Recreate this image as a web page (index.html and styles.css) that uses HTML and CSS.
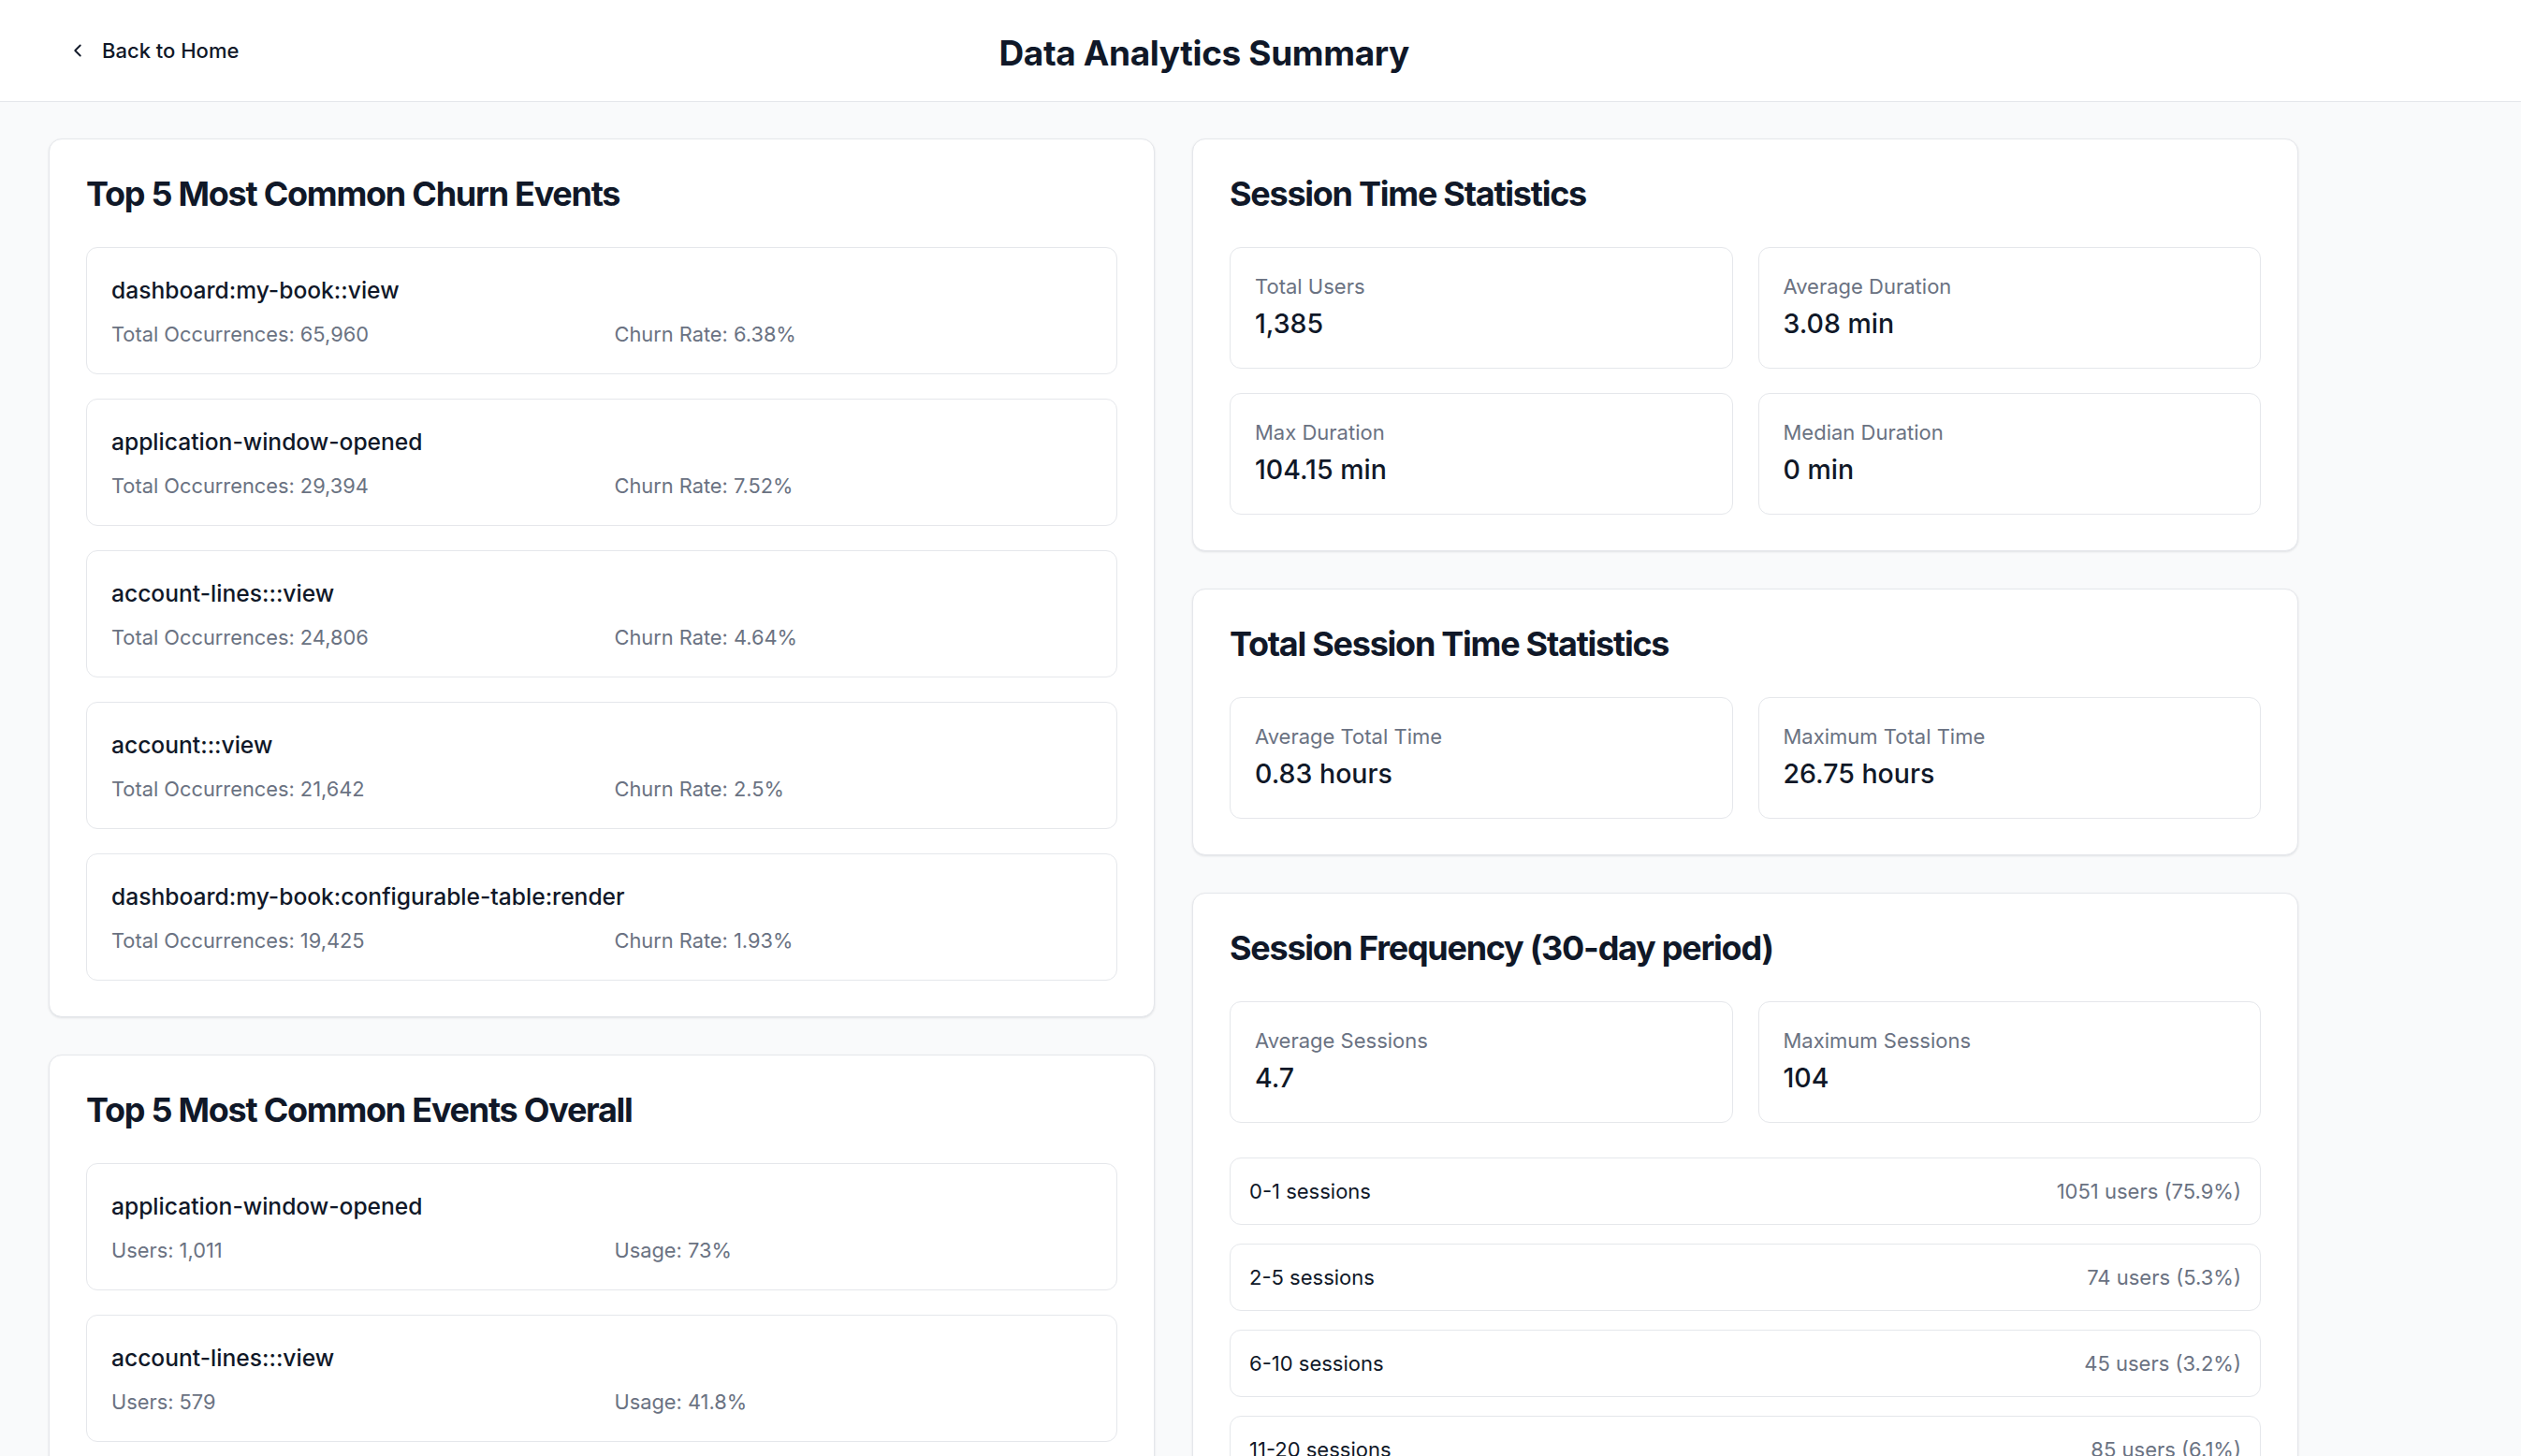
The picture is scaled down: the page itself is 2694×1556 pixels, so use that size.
FILE: index.html
```html
<!DOCTYPE html>
<html lang="en">
<head>
    <meta charset="UTF-8">
    <meta name="viewport" content="width=device-width, initial-scale=1.0">
    <title>Data Analytics Summary</title>
    <link rel="stylesheet" href="styles.css">
</head>
<body>
    <header class="top-bar">
        <a class="back-link" href="#">
            <svg class="back-icon" viewBox="0 0 24 24" fill="none" stroke="currentColor" stroke-width="2" stroke-linecap="round" stroke-linejoin="round">
                <path d="m15 18-6-6 6-6"/>
            </svg>
            <span>Back to Home</span>
        </a>
        <h1 class="page-title">Data Analytics Summary</h1>
        <div class="top-bar-spacer"></div>
    </header>

    <main class="page">
        <div class="columns">
            <div class="column">
                <section class="card">
                    <h2 class="card-title">Top 5 Most Common Churn Events</h2>
                    <div class="event-list">
                        <div class="event-item">
                            <div class="event-name">dashboard:my-book::view</div>
                            <div class="event-meta">
                                <span>Total Occurrences: 65,960</span>
                                <span>Churn Rate: 6.38%</span>
                            </div>
                        </div>
                        <div class="event-item">
                            <div class="event-name">application-window-opened</div>
                            <div class="event-meta">
                                <span>Total Occurrences: 29,394</span>
                                <span>Churn Rate: 7.52%</span>
                            </div>
                        </div>
                        <div class="event-item">
                            <div class="event-name">account-lines:::view</div>
                            <div class="event-meta">
                                <span>Total Occurrences: 24,806</span>
                                <span>Churn Rate: 4.64%</span>
                            </div>
                        </div>
                        <div class="event-item">
                            <div class="event-name">account:::view</div>
                            <div class="event-meta">
                                <span>Total Occurrences: 21,642</span>
                                <span>Churn Rate: 2.5%</span>
                            </div>
                        </div>
                        <div class="event-item">
                            <div class="event-name">dashboard:my-book:configurable-table:render</div>
                            <div class="event-meta">
                                <span>Total Occurrences: 19,425</span>
                                <span>Churn Rate: 1.93%</span>
                            </div>
                        </div>
                    </div>
                </section>

                <section class="card">
                    <h2 class="card-title">Top 5 Most Common Events Overall</h2>
                    <div class="event-list">
                        <div class="event-item">
                            <div class="event-name">application-window-opened</div>
                            <div class="event-meta">
                                <span>Users: 1,011</span>
                                <span>Usage: 73%</span>
                            </div>
                        </div>
                        <div class="event-item">
                            <div class="event-name">account-lines:::view</div>
                            <div class="event-meta">
                                <span>Users: 579</span>
                                <span>Usage: 41.8%</span>
                            </div>
                        </div>
                    </div>
                </section>
            </div>

            <div class="column">
                <section class="card">
                    <h2 class="card-title">Session Time Statistics</h2>
                    <div class="stat-grid">
                        <div class="stat-box">
                            <div class="stat-label">Total Users</div>
                            <div class="stat-value">1,385</div>
                        </div>
                        <div class="stat-box">
                            <div class="stat-label">Average Duration</div>
                            <div class="stat-value">3.08 min</div>
                        </div>
                        <div class="stat-box">
                            <div class="stat-label">Max Duration</div>
                            <div class="stat-value">104.15 min</div>
                        </div>
                        <div class="stat-box">
                            <div class="stat-label">Median Duration</div>
                            <div class="stat-value">0 min</div>
                        </div>
                    </div>
                </section>

                <section class="card">
                    <h2 class="card-title">Total Session Time Statistics</h2>
                    <div class="stat-grid">
                        <div class="stat-box">
                            <div class="stat-label">Average Total Time</div>
                            <div class="stat-value">0.83 hours</div>
                        </div>
                        <div class="stat-box">
                            <div class="stat-label">Maximum Total Time</div>
                            <div class="stat-value">26.75 hours</div>
                        </div>
                    </div>
                </section>

                <section class="card">
                    <h2 class="card-title">Session Frequency (30-day period)</h2>
                    <div class="stat-grid">
                        <div class="stat-box">
                            <div class="stat-label">Average Sessions</div>
                            <div class="stat-value">4.7</div>
                        </div>
                        <div class="stat-box">
                            <div class="stat-label">Maximum Sessions</div>
                            <div class="stat-value">104</div>
                        </div>
                    </div>
                    <div class="freq-list">
                        <div class="freq-row">
                            <span class="freq-range">0-1 sessions</span>
                            <span class="freq-count">1051 users (75.9%)</span>
                        </div>
                        <div class="freq-row">
                            <span class="freq-range">2-5 sessions</span>
                            <span class="freq-count">74 users (5.3%)</span>
                        </div>
                        <div class="freq-row">
                            <span class="freq-range">6-10 sessions</span>
                            <span class="freq-count">45 users (3.2%)</span>
                        </div>
                        <div class="freq-row">
                            <span class="freq-range">11-20 sessions</span>
                            <span class="freq-count">85 users (6.1%)</span>
                        </div>
                    </div>
                </section>
            </div>
        </div>
    </main>
</body>
</html>
```

FILE: styles.css
```css
* {
    box-sizing: border-box;
}
body {
    font-family: 'Inter', 'Noto Sans', sans-serif;
    margin: 0;
    background-color: #f9fafb;
    color: #101828;
}
.top-bar {
    display: flex;
    align-items: center;
    height: 109px;
    padding: 0 72px;
    background: white;
    border-bottom: 1px solid #e5e7eb;
}
.back-link {
    display: flex;
    align-items: center;
    gap: 15px;
    color: #101828;
    text-decoration: none;
    font-size: 22px;
    font-weight: 500;
    line-height: 1.2;
}
.back-icon {
    width: 22px;
    height: 22px;
}
.page-title {
    flex: 1;
    margin: 4px 0 0;
    text-align: center;
    font-size: 37px;
    font-weight: 700;
    line-height: 1;
    letter-spacing: -0.01em;
}
.top-bar-spacer {
    width: 304px;
}
.page {
    padding: 39px 52px;
}
.columns {
    max-width: 2404px;
    display: grid;
    grid-template-columns: 1fr 1fr;
    gap: 40px;
    align-items: start;
}
.column {
    display: flex;
    flex-direction: column;
    gap: 40px;
}
.card {
    background: white;
    border: 1px solid #e5e7eb;
    border-radius: 14px;
    box-shadow: 0 1px 3px rgba(16, 24, 40, 0.07), 0 1px 2px rgba(16, 24, 40, 0.04);
    padding: 40px 39px 38px;
}
.card-title {
    margin: 0 0 38px;
    font-size: 36px;
    font-weight: 700;
    line-height: 37px;
    letter-spacing: -0.035em;
}
.event-list {
    display: flex;
    flex-direction: column;
    gap: 26px;
}
.event-item {
    border: 1px solid #e5e7eb;
    border-radius: 12px;
    padding: 27px 26px;
}
.event-name {
    font-size: 24.6px;
    font-weight: 500;
    line-height: 36px;
    margin-bottom: 15px;
}
.event-meta {
    display: grid;
    grid-template-columns: 1fr 1fr;
    gap: 27px;
    font-size: 21.8px;
    line-height: 29px;
    color: #6a7282;
}
.stat-grid {
    display: grid;
    grid-template-columns: 1fr 1fr;
    gap: 26px 27px;
}
.stat-box {
    border: 1px solid #e5e7eb;
    border-radius: 12px;
    padding: 27px 26px;
}
.stat-label {
    font-size: 22px;
    line-height: 29px;
    color: #6a7282;
}
.stat-value {
    margin-top: 4px;
    font-size: 28.5px;
    font-weight: 500;
    line-height: 41px;
}
.freq-list {
    display: flex;
    flex-direction: column;
    gap: 20px;
    margin-top: 37px;
}
.freq-row {
    display: flex;
    justify-content: space-between;
    align-items: center;
    border: 1px solid #e5e7eb;
    border-radius: 12px;
    padding: 20px;
    font-size: 22px;
    line-height: 30px;
}
.freq-count {
    color: #6a7282;
}
```
